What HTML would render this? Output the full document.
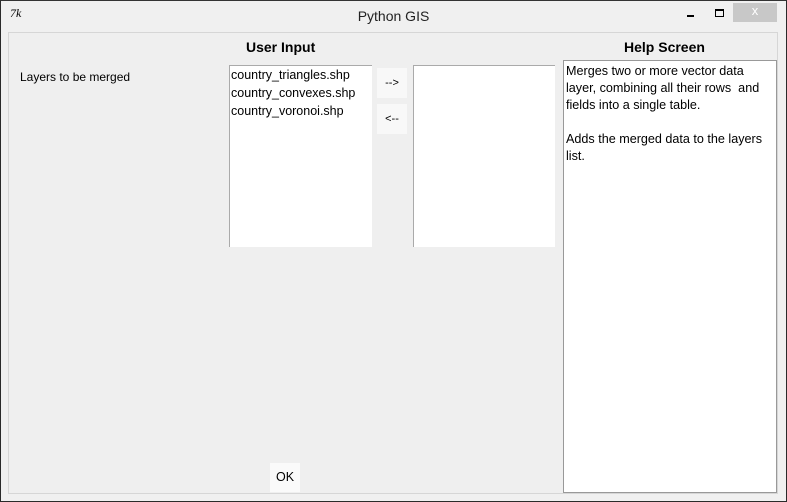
<!DOCTYPE html><html><head><style>
body{margin:0;width:787px;height:502px;overflow:hidden;background:#f0f0f0;font-family:"Liberation Sans",sans-serif;font-size:12px;color:#000;position:relative}
.a{position:absolute}
</style></head><body>
<div class="a" style="left:0;top:0;width:785px;height:500px;border:1px solid #2a2a2a;border-top:1px solid #333;background:#f0f0f0"></div>
<div class="a" style="left:10px;top:6px;font-family:'Liberation Serif',serif;font-style:italic;font-size:12px">7k</div>
<div class="a" style="left:0;width:787px;top:8px;text-align:center;font-size:14px;color:#222">Python GIS</div>
<div class="a" style="left:687px;top:15px;width:7px;height:2px;background:#000"></div>
<div class="a" style="left:715px;top:9px;width:7px;height:5px;border:1px solid #000;border-top-width:2px"></div>
<div class="a" style="left:733px;top:3px;width:44px;height:19px;background:#c8c8c8"></div>
<div class="a" style="left:733px;top:3px;width:44px;text-align:center;color:#fff;font-size:13px">x</div>
<div class="a" style="left:8px;top:32px;width:768px;height:460px;border:1px solid #d6d6d6;background:#efefef"></div>
<div class="a" style="left:246px;top:39px;font-weight:bold;font-size:14px">User Input</div>
<div class="a" style="left:624px;top:39px;font-weight:bold;font-size:14px">Help Screen</div>
<div class="a" style="left:20px;top:70px">Layers to be merged</div>
<div class="a" style="left:229px;top:65px;width:141px;height:181px;background:#fff;border-left:1px solid #aaa;border-top:1px solid #aaa;line-height:18px;padding-left:1px;font-size:12.5px">country_triangles.shp<br>country_convexes.shp<br>country_voronoi.shp</div>
<div class="a" style="left:377px;top:68px;width:30px;height:30px;background:#f8f8f8;text-align:center;line-height:30px;font-size:11px">--&gt;</div>
<div class="a" style="left:377px;top:104px;width:30px;height:30px;background:#f8f8f8;text-align:center;line-height:30px;font-size:11px">&lt;--</div>
<div class="a" style="left:413px;top:65px;width:141px;height:181px;background:#fff;border-left:1px solid #aaa;border-top:1px solid #aaa"></div>
<div class="a" style="left:563px;top:60px;width:208px;height:427px;background:#fff;border:1px solid #999;padding:2px;line-height:17px;font-size:12.6px">Merges two or more vector data layer, combining all their rows&nbsp; and fields into a single table.<br><br>Adds the merged data to the layers list.</div>
<div class="a" style="left:270px;top:463px;width:30px;height:29px;background:#fafafa;text-align:center;line-height:29px;font-size:12.5px">OK</div>
</body></html>
